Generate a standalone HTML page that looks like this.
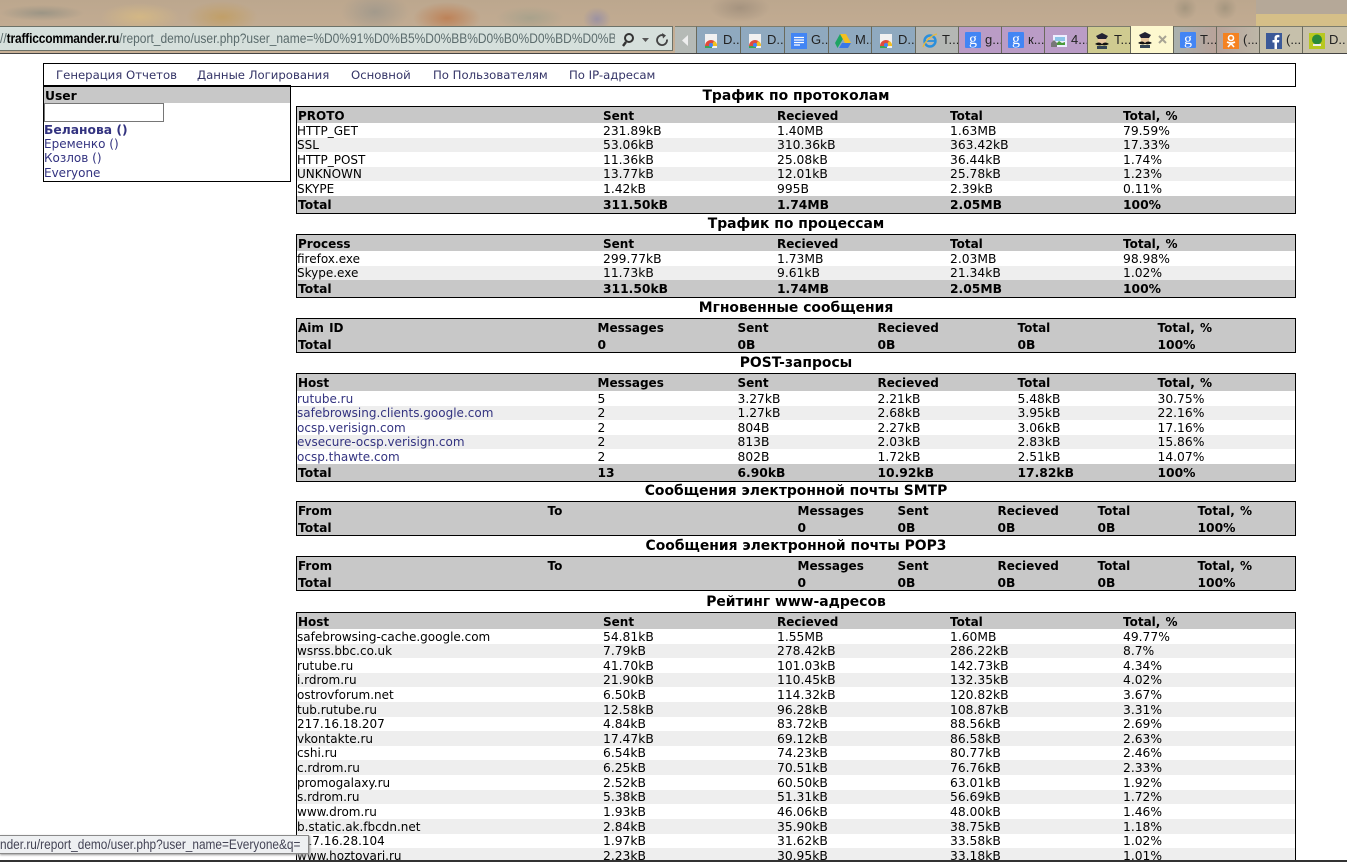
<!DOCTYPE html>
<html><head><meta charset="utf-8"><title>Traffic Commander</title>
<style>
html,body{margin:0;padding:0;width:1347px;height:862px;overflow:hidden;background:#fff}
body{position:relative;font-family:"DejaVu Sans","Liberation Sans",sans-serif;font-size:12.3px;color:#000}
a{color:#333380;text-decoration:none}
#bg{position:absolute;left:0;top:0;width:1347px;height:54px;background:linear-gradient(#0000 0,#0000 14px,#d5bf88 14px,#d5bf88 27px) 1256px 0/91px 27px no-repeat,linear-gradient(#b5a898,#b5a898) 1256px 0/91px 14px no-repeat,radial-gradient(ellipse 42px 8px at 42px 13px,#9c9585,transparent),radial-gradient(ellipse 40px 14px at 140px 17px,#d3b785,transparent),radial-gradient(ellipse 36px 16px at 222px 17px,#c19f68,transparent),radial-gradient(ellipse 34px 20px at 375px 12px,#a39a8c,transparent),radial-gradient(ellipse 34px 16px at 447px 18px,#bd8258,transparent),radial-gradient(ellipse 34px 12px at 530px 18px,#a9a28c,transparent),radial-gradient(ellipse 14px 12px at 597px 19px,#9c92a2,transparent),radial-gradient(ellipse 30px 14px at 740px 8px,#a5937f,transparent),radial-gradient(ellipse 12px 12px at 1185px 8px,#a5967f,transparent),radial-gradient(ellipse 12px 12px at 1225px 8px,#a5967f,transparent),linear-gradient(#bca78e,#c8b096)}
#addr{position:absolute;left:0;top:26px;width:672px;height:23px;background:#d6e0dc;border:1px solid #6d7268;border-left:0;font:13.4px/24px "Liberation Sans",sans-serif;color:#5b6b6c;white-space:nowrap;overflow:hidden}
#addr b{color:#000;font-weight:bold;letter-spacing:-.2px}
#addr span.u{position:absolute;left:0;top:0;width:687px;overflow:hidden;transform:scaleX(.895);transform-origin:0 0}
.tb{position:absolute;top:26px;height:27px;box-sizing:border-box;border-right:1px solid #6a6a5c;border-top:1px solid #7c7c6c;font:13px/26px "Liberation Sans",sans-serif;color:#222;white-space:nowrap;overflow:hidden}
.tb i{position:absolute;left:6px;top:5px;width:16px;height:16px;display:block;font-style:normal}
.tb span{position:absolute;left:26px;top:0}
.bl{background:#8fa9bf}.pu{background:#ba9cc6}.gr{background:#b4b7b4}
.gi{background:#4285f4;color:#fff;font:16px/16px "Liberation Serif",serif;text-align:center;border-radius:1px}
#line{position:absolute;left:0;top:53px;width:1347px;height:1px;background:#444}
.abs{position:absolute}
#nav{position:absolute;left:43px;top:63px;width:1251px;height:22px;border:1px solid #000;background:#fff;font-size:11.7px}
#nav a{position:absolute;top:0;line-height:22px;white-space:nowrap;color:#333366}
#usr{position:absolute;left:43px;top:85px;width:246px;height:94px;border:1px solid #000;border-top:2px solid #000;background:#fff;font-size:12px}
#usr .h{height:16px;line-height:18px;background:#c8c8c8;font-weight:bold;padding-left:1px;font-size:12.3px}
#usr .in{position:absolute;left:0;top:16px;width:118px;height:17px;border:1px solid #767676;background:#fff}
#usr a{position:absolute;left:0;white-space:nowrap;line-height:14px}
.ti{position:absolute;left:296px;width:1000px;margin-top:1px;text-align:center;font-weight:bold;font-size:13.9px;line-height:16px;white-space:nowrap}
.t{position:absolute;left:296px;width:998px;border:1px solid #000;background:#fff}
.r{position:relative;height:14.62px;line-height:14.62px;white-space:nowrap}
.r.e{background:#eee}
.r.h,.r.f{background:#c8c8c8;font-weight:bold}
.r.h{height:16px;line-height:16px;font-size:12px;word-spacing:1px}
.r.f{height:17px;line-height:17px}
.r span{position:absolute;top:.6px;white-space:nowrap}
.r.h span,.r.f span{top:1px}
.r span:first-child{font-size:12px}
.r.f span:first-child{font-size:12.3px}
.r.h span:first-child,.r.f span:first-child{padding-left:1px}
.b .r.h,.c .r.h{height:17px;line-height:17px}
.b .r.h span,.c .r.h span{top:1px}
.b .r.f.s,.c .r.f{height:16px;line-height:16px}
.a span:nth-child(1){left:0}.a span:nth-child(2){left:306px}.a span:nth-child(3){left:480px}.a span:nth-child(4){left:653px}.a span:nth-child(5){left:826px}
.b span:nth-child(1){left:0}.b span:nth-child(2){left:300.5px}.b span:nth-child(3){left:440.5px}.b span:nth-child(4){left:580.5px}.b span:nth-child(5){left:720.5px}.b span:nth-child(6){left:860.5px}
.c span:nth-child(1){left:0}.c span:nth-child(2){left:250.5px}.c span:nth-child(3){left:500.5px}.c span:nth-child(4){left:600.5px}.c span:nth-child(5){left:700.5px}.c span:nth-child(6){left:800.5px}.c span:nth-child(7){left:900.5px}
#st{position:absolute;left:-1px;top:835px;width:308px;height:17px;background:#eef0f2;border:1px solid #8a8a8a;box-shadow:1px 1px 2px #999;font:13.4px/18px "Liberation Sans",sans-serif;color:#445;white-space:nowrap;overflow:hidden}
#st span{display:block;transform:scaleX(.885);transform-origin:0 0;width:345px}
#btm{position:absolute;left:0;top:860px;width:1347px;height:2px;background:#333}
</style></head><body>
<div id="bg"></div>
<div id="addr"><span class="u">//<b>trafficcommander.ru</b>/report_demo/user.php?user_name=%D0%91%D0%B5%D0%BB%D0%B0%D0%BD%D0%BE%D0%B2%D0%B0</span>
<svg class="abs" style="left:621px;top:5px" width="50" height="16" viewBox="0 0 50 16"><circle cx="8" cy="6" r="4" fill="none" stroke="#333" stroke-width="2"/><path d="M5 10L2 14" stroke="#333" stroke-width="2.4"/><path d="M21 6h7l-3.500 4z" fill="#555"/><path d="M43 3.500a5 5 0 1 0 3 4" fill="none" stroke="#444" stroke-width="1.800"/><path d="M41 1l4 2.500-3 3z" fill="#444"/></svg></div>
<div id="line"></div>
<div class="tb gr" style="left:675px;width:22px;background:#b5bab6"><svg class="abs" style="left:6px;top:7px" width="8" height="13"><path d="M7 1v11L1 6.500z" fill="#eee"/></svg></div>
<div class="tb bl" style="left:697px;width:44px"><i><svg width="16" height="16"><rect x="2" y="1" width="12" height="14" fill="#f1f1f1"/><path d="M2 13a6 6 0 0 1 12 0z" fill="#e04a3a"/><path d="M8 13h6a5 5 0 0 0-3-5z" fill="#f4c020"/><path d="M2 13h7v2H2z" fill="#3aa655"/><circle cx="8" cy="12" r="2" fill="#4285f4"/></svg></i><span>D...</span></div>
<div class="tb bl" style="left:741px;width:44px"><i><svg width="16" height="16"><rect x="2" y="1" width="12" height="14" fill="#f1f1f1"/><path d="M2 13a6 6 0 0 1 12 0z" fill="#e04a3a"/><path d="M8 13h6a5 5 0 0 0-3-5z" fill="#f4c020"/><path d="M2 13h7v2H2z" fill="#3aa655"/><circle cx="8" cy="12" r="2" fill="#4285f4"/></svg></i><span>D...</span></div>
<div class="tb bl" style="left:785px;width:44px"><i><svg width="16" height="16"><rect width="16" height="16" fill="#4285f4"/><path d="M3 4.500h10M3 7h10M3 9.500h10M3 12h6" stroke="#fff" stroke-width="1.200"/></svg></i><span>G...</span></div>
<div class="tb bl" style="left:829px;width:43px"><i><svg width="16" height="16"><path d="M5 1h6L5.500 10 2.500 15 0 10z" fill="#1fa463"/><path d="M5 1h6l5 9h-6z" fill="#f4c020"/><path d="M4 15l3-5h9l-3 5z" fill="#3b78e7"/></svg></i><span>M...</span></div>
<div class="tb bl" style="left:872px;width:44px"><i><svg width="16" height="16"><rect x="2" y="1" width="12" height="14" fill="#f1f1f1"/><path d="M2 13a6 6 0 0 1 12 0z" fill="#e04a3a"/><path d="M8 13h6a5 5 0 0 0-3-5z" fill="#f4c020"/><path d="M2 13h7v2H2z" fill="#3aa655"/><circle cx="8" cy="12" r="2" fill="#4285f4"/></svg></i><span>D..</span></div>
<div class="tb gr" style="left:916px;width:43px"><i><svg width="16" height="16"><ellipse cx="8" cy="8" rx="5.500" ry="5.500" fill="none" stroke="#2a8fdc" stroke-width="2.400"/><path d="M3 8h10" stroke="#2a8fdc" stroke-width="1.800"/><path d="M1 14C3 8 10 2 15 1" fill="none" stroke="#e8b83a" stroke-width="1.300"/></svg></i><span>T...</span></div>
<div class="tb pu" style="left:959px;width:43px"><i class="gi">g</i><span>g...</span></div>
<div class="tb pu" style="left:1002px;width:43px"><i class="gi">g</i><span>к...</span></div>
<div class="tb pu" style="left:1045px;width:43px"><i><svg width="16" height="16"><rect x="2" y="2" width="14" height="12" fill="#eef"/><path d="M4 12l4-4 3 2 3-1v3z" fill="#4a9a3a"/><rect x="4" y="4" width="10" height="4" fill="#8cc4e8"/><path d="M0 10l3-3 3 3v4H0z" fill="#777"/></svg></i><span>4...</span></div>
<div class="tb" style="left:1088px;width:43px;background:#cfcb90"><i><svg width="16" height="16"><path d="M2 3l6-3 6 3-2 3H4z" fill="#223"/><rect x="4" y="6" width="8" height="6" fill="#e8c8a0"/><path d="M1 11q4-3 7 0 3-3 7 0-3 2-7 1-4 1-7-1z" fill="#111"/><path d="M3 13h10v3H3z" fill="#345"/></svg></i><span>T...</span></div>
<div class="tb" style="left:1131px;width:43px;background:#fdf8cf;border-top:0;color:#999"><i><svg width="16" height="16"><path d="M2 3l6-3 6 3-2 3H4z" fill="#223"/><rect x="4" y="6" width="8" height="6" fill="#e8c8a0"/><path d="M1 11q4-3 7 0 3-3 7 0-3 2-7 1-4 1-7-1z" fill="#111"/><path d="M3 13h10v3H3z" fill="#345"/></svg></i><svg class="abs" style="left:27px;top:9px" width="10" height="10"><path d="M1 1l7 7M8 1L1 8" stroke="#a8a494" stroke-width="2"/></svg></div>
<div class="tb" style="left:1174px;width:43px;background:linear-gradient(90deg,#a9b1ae,#b9a39a)"><i class="gi">g</i><span>T...</span></div>
<div class="tb" style="left:1217px;width:43px;background:linear-gradient(90deg,#b8a49c,#bdb7a8)"><i><svg width="16" height="16"><rect width="16" height="16" fill="#f58220"/><circle cx="8" cy="5" r="2.500" fill="none" stroke="#fff" stroke-width="1.600"/><path d="M4 9q4 2 8 0M8 10.500L5 14M8 10.500l3 3.500" fill="none" stroke="#fff" stroke-width="1.600"/></svg></i><span>(...</span></div>
<div class="tb" style="left:1260px;width:43px;background:#c6c0ab"><i><svg width="16" height="16"><rect width="16" height="16" fill="#3b5998"/><path d="M11 16V9.500h2l.3-2.500H11V5.500c0-.8.300-1.200 1.200-1.200h1.200V2c-2.800-.3-4.900.3-4.900 3v2H6.500v2.500h2V16z" fill="#fff"/></svg></i><span>(...</span></div>
<div class="tb" style="left:1303px;width:44px;background:#c8c1ab;border-right:0"><i><svg width="16" height="16"><rect width="16" height="16" fill="#b8c820"/><circle cx="8" cy="6.500" r="5" fill="#2a8a3a"/><rect x="4" y="11" width="8" height="2" fill="#eee"/></svg></i><span>D..</span></div>

<div id="nav"><a style="left:12px">Генерация Отчетов</a><a style="left:153px">Данные Логирования</a><a style="left:307px">Основной</a><a style="left:389px">По Пользователям</a><a style="left:525px">По IP-адресам</a></div>
<div id="usr"><div class="h">User</div><div class="in"></div>
<a style="top:36px;font-weight:bold;font-size:12.3px">Беланова ()</a><a style="top:50px">Еременко ()</a><a style="top:64px">Козлов ()</a><a style="top:79px">Everyone</a></div>

<div class="ti" style="top:87px">Трафик по протоколам</div>
<div class="t a" style="top:106px">
<div class="r h"><span>PROTO</span><span>Sent</span><span>Recieved</span><span>Total</span><span>Total, %</span></div>
<div class="r"><span>HTTP_GET</span><span>231.89kB</span><span>1.40MB</span><span>1.63MB</span><span>79.59%</span></div>
<div class="r e"><span>SSL</span><span>53.06kB</span><span>310.36kB</span><span>363.42kB</span><span>17.33%</span></div>
<div class="r"><span>HTTP_POST</span><span>11.36kB</span><span>25.08kB</span><span>36.44kB</span><span>1.74%</span></div>
<div class="r e"><span>UNKNOWN</span><span>13.77kB</span><span>12.01kB</span><span>25.78kB</span><span>1.23%</span></div>
<div class="r"><span>SKYPE</span><span>1.42kB</span><span>995B</span><span>2.39kB</span><span>0.11%</span></div>
<div class="r f"><span>Total</span><span>311.50kB</span><span>1.74MB</span><span>2.05MB</span><span>100%</span></div>
</div>

<div class="ti" style="top:215px">Трафик по процессам</div>
<div class="t a" style="top:234px">
<div class="r h"><span>Process</span><span>Sent</span><span>Recieved</span><span>Total</span><span>Total, %</span></div>
<div class="r"><span>firefox.exe</span><span>299.77kB</span><span>1.73MB</span><span>2.03MB</span><span>98.98%</span></div>
<div class="r e"><span>Skype.exe</span><span>11.73kB</span><span>9.61kB</span><span>21.34kB</span><span>1.02%</span></div>
<div class="r f"><span>Total</span><span>311.50kB</span><span>1.74MB</span><span>2.05MB</span><span>100%</span></div>
</div>

<div class="ti" style="top:299px">Мгновенные сообщения</div>
<div class="t b" style="top:318px">
<div class="r h"><span>Aim ID</span><span>Messages</span><span>Sent</span><span>Recieved</span><span>Total</span><span>Total, %</span></div>
<div class="r f s"><span>Total</span><span>0</span><span>0B</span><span>0B</span><span>0B</span><span>100%</span></div>
</div>

<div class="ti" style="top:354px">POST-запросы</div>
<div class="t b" style="top:373px">
<div class="r h"><span>Host</span><span>Messages</span><span>Sent</span><span>Recieved</span><span>Total</span><span>Total, %</span></div>
<div class="r"><span><a>rutube.ru</a></span><span>5</span><span>3.27kB</span><span>2.21kB</span><span>5.48kB</span><span>30.75%</span></div>
<div class="r e"><span><a>safebrowsing.clients.google.com</a></span><span>2</span><span>1.27kB</span><span>2.68kB</span><span>3.95kB</span><span>22.16%</span></div>
<div class="r"><span><a>ocsp.verisign.com</a></span><span>2</span><span>804B</span><span>2.27kB</span><span>3.06kB</span><span>17.16%</span></div>
<div class="r e"><span><a>evsecure-ocsp.verisign.com</a></span><span>2</span><span>813B</span><span>2.03kB</span><span>2.83kB</span><span>15.86%</span></div>
<div class="r"><span><a>ocsp.thawte.com</a></span><span>2</span><span>802B</span><span>1.72kB</span><span>2.51kB</span><span>14.07%</span></div>
<div class="r f"><span>Total</span><span>13</span><span>6.90kB</span><span>10.92kB</span><span>17.82kB</span><span>100%</span></div>
</div>

<div class="ti" style="top:482px">Сообщения электронной почты SMTP</div>
<div class="t c" style="top:501px">
<div class="r h"><span>From</span><span>To</span><span>Messages</span><span>Sent</span><span>Recieved</span><span>Total</span><span>Total, %</span></div>
<div class="r f"><span>Total</span><span></span><span>0</span><span>0B</span><span>0B</span><span>0B</span><span>100%</span></div>
</div>

<div class="ti" style="top:537px">Сообщения электронной почты POP3</div>
<div class="t c" style="top:556px">
<div class="r h"><span>From</span><span>To</span><span>Messages</span><span>Sent</span><span>Recieved</span><span>Total</span><span>Total, %</span></div>
<div class="r f"><span>Total</span><span></span><span>0</span><span>0B</span><span>0B</span><span>0B</span><span>100%</span></div>
</div>

<div class="ti" style="top:593px">Рейтинг www-адресов</div>
<div class="t a" style="top:612px">
<div class="r h"><span>Host</span><span>Sent</span><span>Recieved</span><span>Total</span><span>Total, %</span></div>
<div class="r"><span>safebrowsing-cache.google.com</span><span>54.81kB</span><span>1.55MB</span><span>1.60MB</span><span>49.77%</span></div>
<div class="r e"><span>wsrss.bbc.co.uk</span><span>7.79kB</span><span>278.42kB</span><span>286.22kB</span><span>8.7%</span></div>
<div class="r"><span>rutube.ru</span><span>41.70kB</span><span>101.03kB</span><span>142.73kB</span><span>4.34%</span></div>
<div class="r e"><span>i.rdrom.ru</span><span>21.90kB</span><span>110.45kB</span><span>132.35kB</span><span>4.02%</span></div>
<div class="r"><span>ostrovforum.net</span><span>6.50kB</span><span>114.32kB</span><span>120.82kB</span><span>3.67%</span></div>
<div class="r e"><span>tub.rutube.ru</span><span>12.58kB</span><span>96.28kB</span><span>108.87kB</span><span>3.31%</span></div>
<div class="r"><span>217.16.18.207</span><span>4.84kB</span><span>83.72kB</span><span>88.56kB</span><span>2.69%</span></div>
<div class="r e"><span>vkontakte.ru</span><span>17.47kB</span><span>69.12kB</span><span>86.58kB</span><span>2.63%</span></div>
<div class="r"><span>cshi.ru</span><span>6.54kB</span><span>74.23kB</span><span>80.77kB</span><span>2.46%</span></div>
<div class="r e"><span>c.rdrom.ru</span><span>6.25kB</span><span>70.51kB</span><span>76.76kB</span><span>2.33%</span></div>
<div class="r"><span>promogalaxy.ru</span><span>2.52kB</span><span>60.50kB</span><span>63.01kB</span><span>1.92%</span></div>
<div class="r e"><span>s.rdrom.ru</span><span>5.38kB</span><span>51.31kB</span><span>56.69kB</span><span>1.72%</span></div>
<div class="r"><span>www.drom.ru</span><span>1.93kB</span><span>46.06kB</span><span>48.00kB</span><span>1.46%</span></div>
<div class="r e"><span>b.static.ak.fbcdn.net</span><span>2.84kB</span><span>35.90kB</span><span>38.75kB</span><span>1.18%</span></div>
<div class="r"><span>217.16.28.104</span><span>1.97kB</span><span>31.62kB</span><span>33.58kB</span><span>1.02%</span></div>
<div class="r e"><span>www.hoztovari.ru</span><span>2.23kB</span><span>30.95kB</span><span>33.18kB</span><span>1.01%</span></div>
</div>
<div id="st"><span>nder.ru/report_demo/user.php?user_name=Everyone&amp;q=</span></div>
<div id="btm"></div>
</body></html>
